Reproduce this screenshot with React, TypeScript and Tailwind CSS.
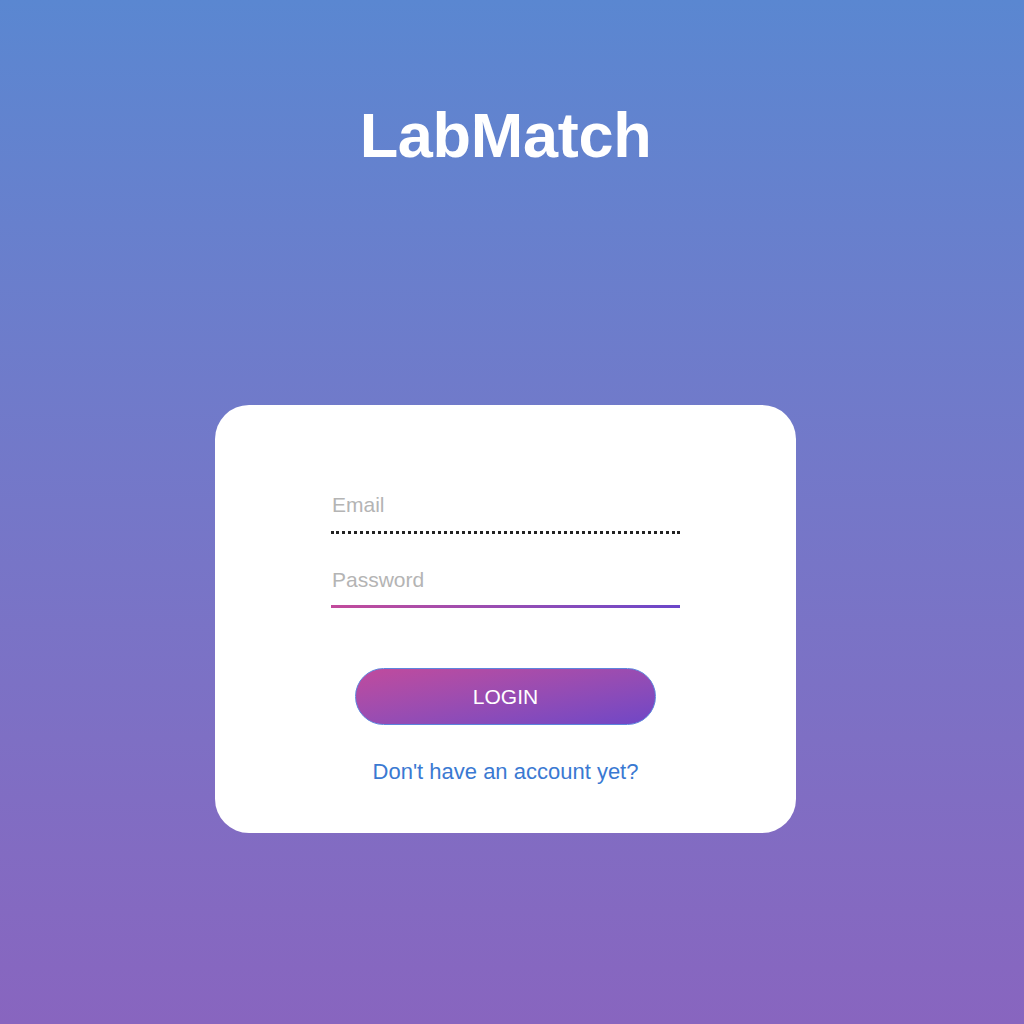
export default function App() {
  return (
    <div
      className="w-[1024px] h-[1024px] flex flex-col items-center bg-gradient-to-b from-[#5a87d1] to-[#8865bf] pr-[13px]"
      style={{ fontFamily: '"Liberation Sans", Arial, sans-serif' }}
    >
      <h1 className="mt-[95px] text-[63px] leading-[80px] font-bold text-white tracking-[-0.3px]">LabMatch</h1>
      <div className="mt-[230px] w-[581px] h-[428px] bg-white rounded-[34px] flex flex-col items-center">
        <div className="mt-[86px] w-[349px] flex flex-col">
          <div className="text-[21px] leading-[28px] text-[#b4b4b4] pl-[1px]">Email</div>
          <div className="mt-[12px] border-b-[3px] border-dotted border-[#222]" />
          <div className="mt-[32px] text-[21px] leading-[28px] text-[#b4b4b4] pl-[1px]">Password</div>
          <div className="mt-[11px] h-[3px] bg-gradient-to-r from-[#c24a9b] to-[#6b46c9]" />
        </div>
        <button className="mt-[60px] w-[301px] h-[57px] rounded-full border border-[#5d84dc] bg-gradient-to-br from-[#c04a9d] to-[#7046c6] text-white text-[21px]">
          LOGIN
        </button>
        <div className="mt-[33px] text-[22px] leading-[28px] text-[#3a79d2]">Don't have an account yet?</div>
      </div>
    </div>
  );
}
